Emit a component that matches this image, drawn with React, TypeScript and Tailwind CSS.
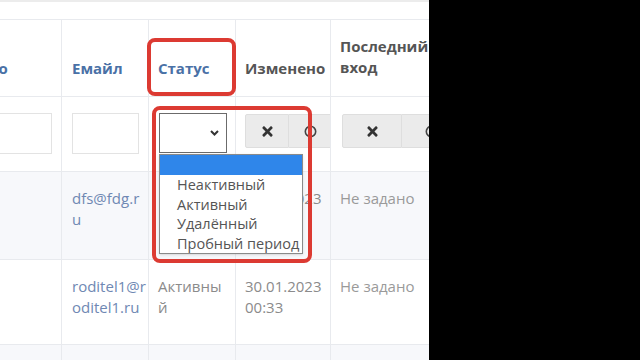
import React from "react";
import { FaTimes } from "react-icons/fa";

function Ring() {
  return (
    <svg width="13" height="13" viewBox="0 0 13 13">
      <circle cx="6.5" cy="6.5" r="5.2" fill="none" stroke="#444" strokeWidth="1.6" />
    </svg>
  );
}

function BtnGroup({ w }: { w: string }) {
  return (
    <div className="flex h-[34px] mt-[1px]">
      <div className={`${w} shrink-0 flex items-center justify-center bg-[#ebebeb] border border-[#dedede] rounded-l-[2px]`}>
        <FaTimes className="text-[15px] text-[#333]" />
      </div>
      <div className={`${w} shrink-0 flex items-center justify-center bg-[#ebebeb] border border-l-0 border-[#dedede]`}>
        <Ring />
      </div>
    </div>
  );
}

export default function App() {
  const cell = "border-r border-b border-[#e8eaee] px-[9px]";
  return (
    <div className="flex w-[640px] h-[360px] overflow-hidden font-['Open_Sans',sans-serif]">
      {/* Left: table */}
      <div className="relative w-[429px] h-full bg-white overflow-hidden">
        <div className="h-[19px] border-t-2 border-[#ececec]" />

        <div className="-ml-[76px] grid grid-cols-[138px_87px_87px_95px_140px] border-t border-[#e8eaee]">
          {/* Header */}
          <div className={`${cell} h-[77px] flex items-end pb-[17px] pl-[10px] overflow-hidden`}>
            <span className="text-[15px] leading-[21px] font-bold text-[#4a71a6] whitespace-nowrap">Отчество</span>
          </div>
          <div className={`${cell} h-[77px] flex items-end pb-[17px] pl-[10px]`}>
            <span className="text-[15px] leading-[21px] font-bold text-[#4a71a6]">Емайл</span>
          </div>
          <div className={`${cell} h-[77px] flex items-end pb-[17px]`}>
            <span className="text-[15px] leading-[21px] font-bold text-[#4a71a6]">Статус</span>
          </div>
          <div className={`${cell} h-[77px] flex items-end pb-[17px]`}>
            <span className="text-[15px] leading-[21px] font-bold text-[#555]">Изменено</span>
          </div>
          <div className={`${cell} h-[77px] flex items-end pb-[18px]`}>
            <span className="text-[15px] leading-[21px] font-bold text-[#555]">Последний<br />вход</span>
          </div>

          {/* Filters */}
          <div className={`${cell} h-[75px] pt-4`}>
            <div className="h-[41px] border border-[#e3e3e3] bg-white" />
          </div>
          <div className={`${cell} h-[75px] pt-4 pl-[10px]`}>
            <div className="w-[67px] h-[41px] border border-[#e3e3e3] bg-white" />
          </div>
          <div className={`${cell} h-[75px] pt-4 pl-[10px]`}>
            <div className="w-[68px] h-[40px] border border-[#6b6b6b] bg-white flex items-center justify-end pr-[7px]">
              <svg width="9" height="6" viewBox="0 0 9 6">
                <polyline points="1,1 4.5,4.5 8,1" fill="none" stroke="#333" strokeWidth="2" />
              </svg>
            </div>
          </div>
          <div className={`${cell} h-[75px] pt-4 overflow-hidden`}>
            <BtnGroup w="w-[44px]" />
          </div>
          <div className={`${cell} h-[75px] pt-4 pl-[11px] overflow-hidden`}>
            <BtnGroup w="w-[60px]" />
          </div>

          {/* Row 1 (status and time are under the open list) */}
          <div className={`${cell} h-[88px] bg-[#f7f8fb]`} />
          <div className={`${cell} h-[88px] bg-[#f7f8fb] pt-4 pl-[10px]`}>
            <div className="text-[15px] leading-[21px] text-[#6f88b3]">dfs@fdg.r<br />u</div>
          </div>
          <div className={`${cell} h-[88px] bg-[#f7f8fb]`} />
          <div className={`${cell} h-[88px] bg-[#f7f8fb] pt-4`}>
            <div className="text-[15px] leading-[21px] text-[#8b8b8b]">30.01.2023</div>
          </div>
          <div className={`${cell} h-[88px] bg-[#f7f8fb] pt-4`}>
            <div className="text-[15px] leading-[21px] text-[#9a9a9a]">Не задано</div>
          </div>

          {/* Row 2 */}
          <div className={`${cell} h-[85px]`} />
          <div className={`${cell} h-[85px] pt-4 pl-[10px]`}>
            <div className="text-[15px] leading-[21px] text-[#6f88b3]">roditel1@r<br />oditel1.ru</div>
          </div>
          <div className={`${cell} h-[85px] pt-4`}>
            <div className="text-[15px] leading-[21px] text-[#8b8b8b]">Активны<br />й</div>
          </div>
          <div className={`${cell} h-[85px] pt-4`}>
            <div className="text-[15px] leading-[21px] text-[#8b8b8b]">30.01.2023<br />00:33</div>
          </div>
          <div className={`${cell} h-[85px] pt-4`}>
            <div className="text-[15px] leading-[21px] text-[#9a9a9a]">Не задано</div>
          </div>

          {/* Row 3 */}
          <div className={`${cell} h-[40px] bg-[#f7f8fb]`} />
          <div className={`${cell} h-[40px] bg-[#f7f8fb]`} />
          <div className={`${cell} h-[40px] bg-[#f7f8fb]`} />
          <div className={`${cell} h-[40px] bg-[#f7f8fb]`} />
          <div className={`${cell} h-[40px] bg-[#f7f8fb]`} />
        </div>

        {/* Open select list */}
        <div className="absolute left-[159px] top-[154px] w-[144px] h-[100px] bg-white border border-[#8a8a8a] shadow-sm">
          <div className="h-[20px] bg-[#2f86ea]" />
          {["Неактивный", "Активный", "Удалённый", "Пробный период"].map((o) => (
            <div key={o} className="pl-[17px] text-[14.5px] leading-[19.5px] text-[#555] whitespace-nowrap">
              {o}
            </div>
          ))}
        </div>

        {/* Highlight frames */}
        <div className="absolute left-[147px] top-[38px] w-[89px] h-[58px] border-[4px] border-[#dc3a32] rounded-[8px]" />
        <div className="absolute left-[152px] top-[106px] w-[160px] h-[157px] border-[4px] border-[#dc3a32] rounded-[8px]" />
      </div>

      {/* Right: black */}
      <div className="flex-1 bg-black" />
    </div>
  );
}
